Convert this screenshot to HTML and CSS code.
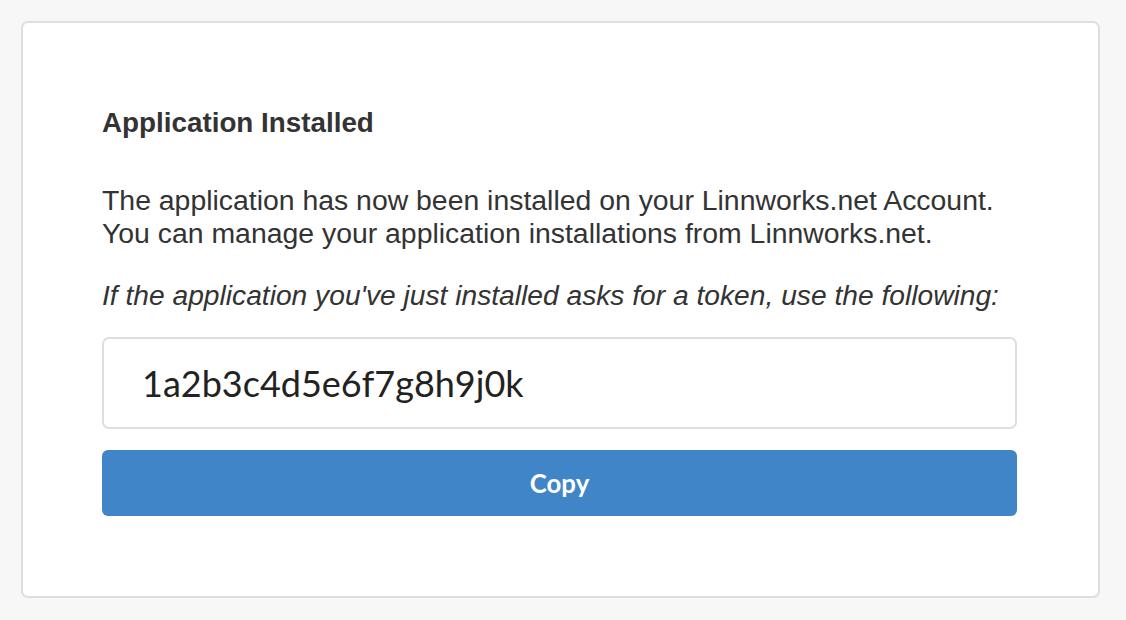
FILE: index.html
```html
<!DOCTYPE html>
<html>
<head>
<meta charset="utf-8">
<link rel="stylesheet" href="styles.css">
</head>
<body>
<div class="page">
  <div class="card">
    <h1 class="title">Application Installed</h1>
    <p class="text">The application has now been installed on your Linnworks.net Account.<br>You can manage your application installations from Linnworks.net.</p>
    <p class="hint">If the application you've just installed asks for a token, use the following:</p>
    <div class="token">1a2b3c4d5e6f7g8h9j0k</div>
    <button class="copy">Copy</button>
  </div>
</div>
</body>
</html>
```
FILE: styles.css
```css
html, body {
  margin: 0;
  padding: 0;
  background: #f7f7f7;
}
.page {
  padding: 21px 26px 22px 21px;
}
.card {
  box-sizing: border-box;
  width: 1079px;
  height: 577px;
  background: #fff;
  border: 2px solid #dedede;
  border-radius: 7px;
  padding: 83px 79px 0 79px;
  font-family: "Liberation Sans", Arial, sans-serif;
  color: #333;
}
.title {
  margin: 0;
  font-size: 27.8px;
  font-weight: bold;
  line-height: 33px;
}
.text {
  margin: 45px 0 0 0;
  font-size: 28.4px;
  line-height: 33px;
  width: 915px;
}
.hint {
  margin: 29px 0 0 0;
  font-size: 28.2px;
  line-height: 33px;
  font-style: italic;
}
.token {
  box-sizing: border-box;
  margin-top: 25px;
  width: 915px;
  height: 92px;
  border: 2px solid #dedede;
  border-radius: 7px;
  padding: 0 38px;
  display: flex;
  align-items: center;
  font-family: Lato, sans-serif;
  font-size: 36px;
  color: #222;
}
.copy {
  display: block;
  margin-top: 21px;
  width: 915px;
  height: 66px;
  border: none;
  border-radius: 6px;
  background: #4085c8;
  color: #fff;
  font-family: Lato, sans-serif;
  font-weight: bold;
  font-size: 25.8px;
  padding: 0;
}
```
